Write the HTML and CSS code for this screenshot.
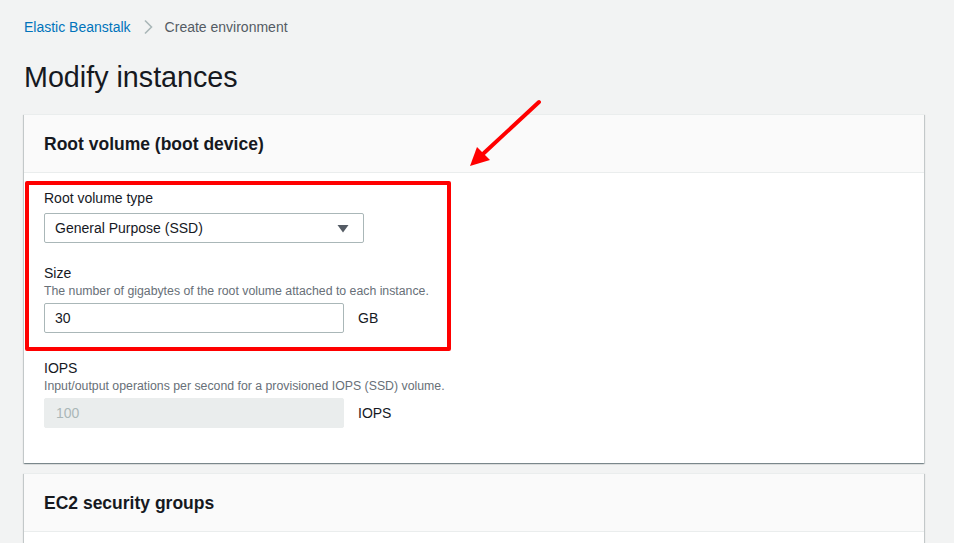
FILE: index.html
```html
<!DOCTYPE html>
<html>
<head>
<meta charset="utf-8">
<link rel="stylesheet" href="styles.css">
</head>
<body>
<div class="page">
  <nav class="crumbs">
    <a class="crumb-link">Elastic Beanstalk</a>
    <svg class="chev" width="10" height="16" viewBox="0 0 10 16"><path d="M2 1.5 L8.5 8 L2 14.5" fill="none" stroke="#aab7b8" stroke-width="1.6"/></svg>
    <span class="crumb-cur">Create environment</span>
  </nav>
  <h1 class="title">Modify instances</h1>

  <section class="panel">
    <header class="panel-head"><h2>Root volume (boot device)</h2></header>
    <div class="panel-body">
      <div class="field f-type">
        <label class="lbl">Root volume type</label>
        <div class="select">
          <span>General Purpose (SSD)</span>
          <svg width="12" height="9" viewBox="0 0 12 9"><path d="M0.5 1 L11.5 1 L6 8.5 Z" fill="#545b64"/></svg>
        </div>
      </div>
      <div class="field f-size">
        <label class="lbl">Size</label>
        <div class="desc">The number of gigabytes of the root volume attached to each instance.</div>
        <div class="row">
          <div class="input">30</div>
          <span class="unit">GB</span>
        </div>
      </div>
      <div class="field f-iops">
        <label class="lbl">IOPS</label>
        <div class="desc">Input/output operations per second for a provisioned IOPS (SSD) volume.</div>
        <div class="row">
          <div class="input disabled">100</div>
          <span class="unit">IOPS</span>
        </div>
      </div>
    </div>
    <div class="highlight"></div>
  </section>

  <section class="panel">
    <header class="panel-head"><h2>EC2 security groups</h2></header>
    <div class="panel-body"></div>
  </section>

  <svg class="arrow" width="100" height="90" viewBox="460 90 100 90">
    <line x1="539" y1="102" x2="484" y2="153" stroke="#ff0000" stroke-width="4" stroke-linecap="round"/>
    <polygon points="470,166 477,147 490,160" fill="#ff0000"/>
  </svg>
</div>
</body>
</html>
```

FILE: styles.css
```css
* { box-sizing: border-box; }
html, body { margin: 0; padding: 0; }
body {
  background: #f2f3f3;
  font-family: "Liberation Sans", Arial, sans-serif;
  color: #16191f;
  width: 954px;
  height: 543px;
  overflow: hidden;
}
.page {
  position: relative;
  padding: 17px 30px 0 24px;
}
.crumbs {
  display: flex;
  align-items: center;
  height: 20px;
  font-size: 14px;
  line-height: 20px;
}
.crumb-link { color: #0073bb; }
.chev { margin: 0 12px 0 12px; }
.crumb-cur { color: #545b64; }
.title {
  margin: 22px 0 19px 0;
  font-size: 28.7px;
  line-height: 36px;
  font-weight: 400;
  color: #16191f;
}
.panel {
  position: relative;
  width: 900px;
  background: #fff;
  border-top: 1px solid #eaeded;
  box-shadow: 0 1px 1px 0 rgba(0,28,36,.3), 1px 1px 1px 0 rgba(0,28,36,.15), -1px 1px 1px 0 rgba(0,28,36,.15);
  margin-bottom: 10px;
}
.panel-head {
  height: 58px;
  background: #fafafa;
  border-bottom: 1px solid #eaeded;
  display: flex;
  align-items: center;
  padding: 0 20px;
}
.panel-head h2 {
  margin: 0;
  font-size: 17.5px;
  font-weight: 700;
  line-height: 24px;
  color: #16191f;
}
.panel-body {
  padding: 15px 20px 35px 20px;
}
.lbl {
  display: block;
  font-size: 14px;
  line-height: 20px;
  color: #16191f;
}
.desc {
  font-size: 12.3px;
  line-height: 16px;
  color: #687078;
}
.f-type .select { margin-top: 5px; }
.f-size { margin-top: 20px; }
.f-iops { margin-top: 25px; }
.row {
  display: flex;
  align-items: center;
  margin-top: 4px;
}
.select {
  width: 320px;
  height: 30px;
  border: 1px solid #aab7b8;
  border-radius: 2px;
  background: #fff;
  display: flex;
  align-items: center;
  justify-content: space-between;
  padding: 0 14px 0 10px;
  font-size: 14px;
  color: #16191f;
}
.input {
  width: 300px;
  height: 30px;
  border: 1px solid #aab7b8;
  border-radius: 2px;
  background: #fff;
  display: flex;
  align-items: center;
  padding: 0 10px;
  font-size: 14px;
  color: #16191f;
}
.input.disabled {
  background: #eaeded;
  border-color: #eaeded;
  color: #aab7b8;
  padding-left: 11px;
}
.unit {
  margin-left: 14px;
  font-size: 14px;
  color: #16191f;
}
.highlight {
  position: absolute;
  left: 1px;
  top: 66px;
  width: 426px;
  height: 170px;
  border: 4px solid #ff0000;
  border-radius: 2px;
}
.arrow {
  position: absolute;
  left: 460px;
  top: 90px;
}
```
